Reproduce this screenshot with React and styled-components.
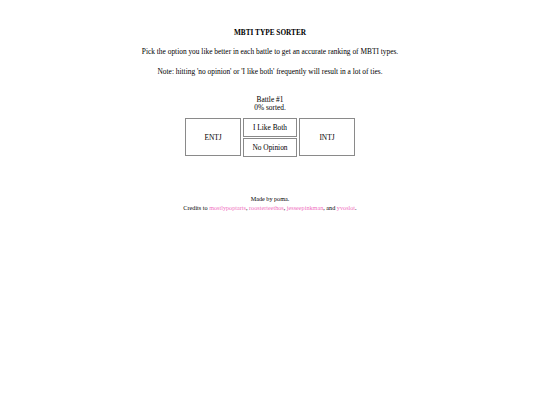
import React from 'react';
import styled, { createGlobalStyle } from 'styled-components';

const GlobalStyle = createGlobalStyle`
  html, body {
    margin: 0;
    padding: 0;
    background: #ffffff;
  }
  body {
    font-family: "Liberation Serif", "Times New Roman", serif;
    color: #000000;
    font-size: 7.4px;
  }
`;

const Page = styled.div`
  width: 540px;
  display: flex;
  flex-direction: column;
  align-items: center;
  text-align: center;
  padding-top: 28px;
`;

const Title = styled.h1`
  margin: 0;
  font-size: 7.3px;
  font-weight: bold;
  line-height: 9px;
`;

const Info = styled.p`
  margin: ${(p) => p.$top || 0}px 0 0;
  line-height: 9px;
`;

const Progress = styled.div`
  margin-top: 20px;
  line-height: 8px;
`;

const Sorter = styled.div`
  margin-top: 6px;
  display: flex;
  gap: 2px;
`;

const Choice = styled.div`
  width: 54px;
  height: 36px;
  border: 1px solid #8a8a8a;
  display: flex;
  align-items: center;
  justify-content: center;
  cursor: pointer;
`;

const Middle = styled.div`
  display: flex;
  flex-direction: column;
  gap: 1px;
`;

const Option = styled.div`
  width: 52px;
  height: 17px;
  border: 1px solid #8a8a8a;
  display: flex;
  align-items: center;
  justify-content: center;
  cursor: pointer;
`;

const Footer = styled.div`
  margin-top: 38px;
  font-size: 6.2px;
  line-height: 8.6px;
`;

const Link = styled.a`
  color: #f06fc0;
  text-decoration: none;
`;

const credits = ['mostlypoptarts', 'roosterteethos', 'jesseepinkman'];

export default function App() {
  return (
    <Page>
      <GlobalStyle />
      <Title>MBTI TYPE SORTER</Title>
      <Info $top={10}>
        Pick the option you like better in each battle to get an accurate ranking of MBTI types.
      </Info>
      <Info $top={11}>
        Note: hitting 'no opinion' or 'I like both' frequently will result in a lot of ties.
      </Info>
      <Progress>
        <div>Battle #1</div>
        <div>0% sorted.</div>
      </Progress>
      <Sorter>
        <Choice>ENTJ</Choice>
        <Middle>
          <Option>I Like Both</Option>
          <Option>No Opinion</Option>
        </Middle>
        <Choice>INTJ</Choice>
      </Sorter>
      <Footer>
        <div>Made by poma.</div>
        <div>
          Credits to{' '}
          {credits.map((name) => (
            <React.Fragment key={name}>
              <Link href="#">{name}</Link>,{' '}
            </React.Fragment>
          ))}
          and <Link href="#">yvoslot</Link>.
        </div>
      </Footer>
    </Page>
  );
}
